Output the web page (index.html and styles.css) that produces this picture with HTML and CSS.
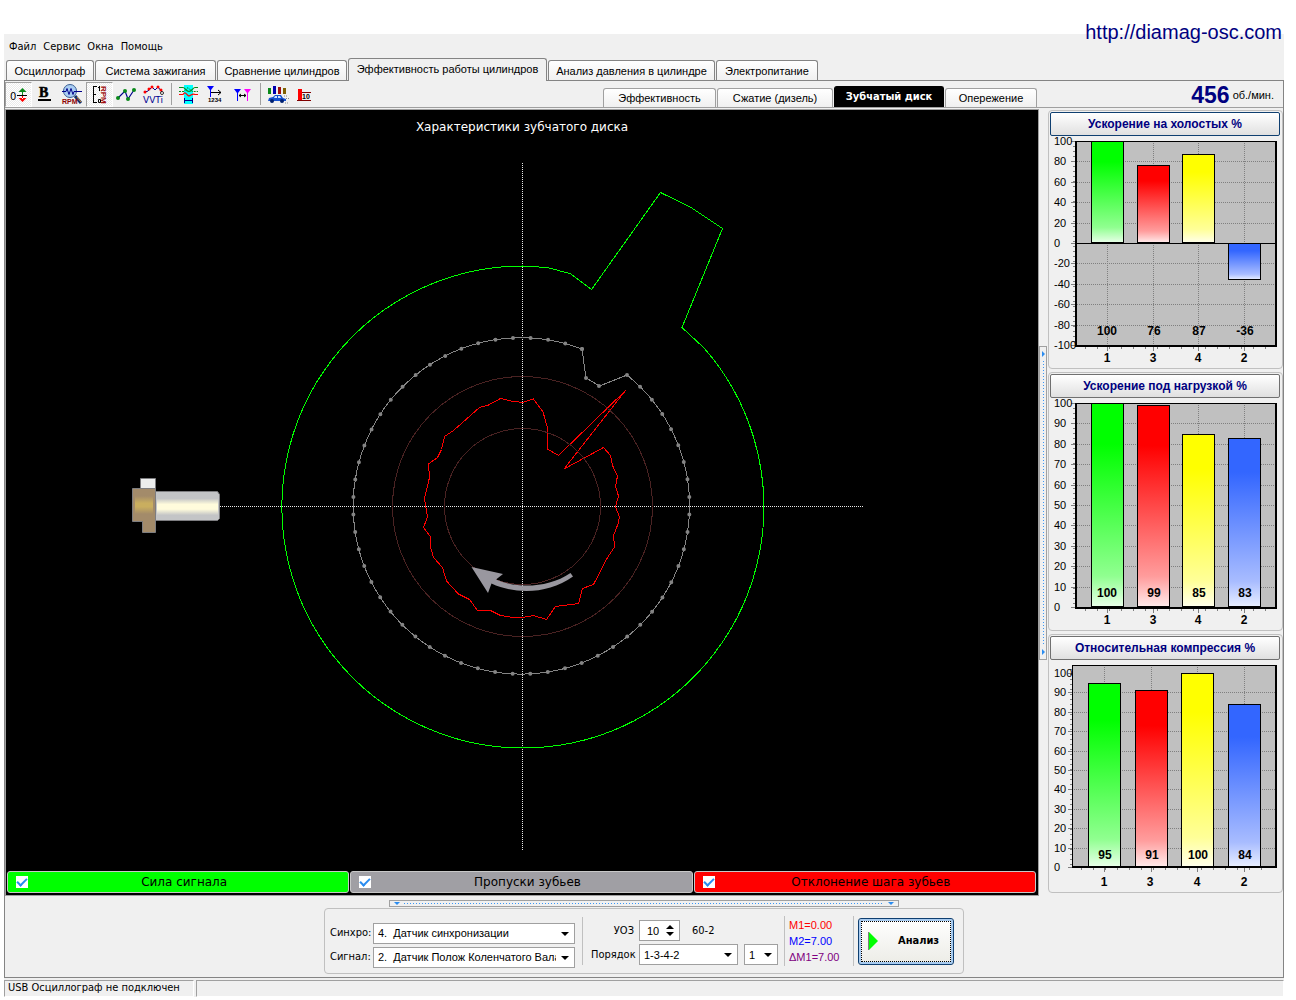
FILE: index.html
```html
<!DOCTYPE html>
<html lang="ru">
<head>
<meta charset="utf-8">
<meta name="viewport" content="width=device-width, initial-scale=1">
<title>Осциллограф</title>
<link rel="stylesheet" href="styles.css">
</head>
<body>
<header class="site"><a class="site-link" href="http://diamag-osc.com">http://diamag-osc.com</a></header>
<div class="app">
  <nav class="menu">
    <a href="#file">Файл</a><a href="#service">Сервис</a><a href="#windows">Окна</a><a href="#help">Помощь</a>
  </nav>
  <div class="tabs" role="tablist">
    <button class="tab" role="tab">Осциллограф</button>
    <button class="tab" role="tab">Система зажигания</button>
    <button class="tab" role="tab">Сравнение цилиндров</button>
    <button class="tab tab-current" role="tab" aria-selected="true">Эффективность работы цилиндров</button>
    <button class="tab" role="tab">Анализ давления в цилиндре</button>
    <button class="tab" role="tab">Электропитание</button>
  </div>
  <main class="page">
    <div class="toolbar">
      <div class="tools">
        <button class="tool tool-on" aria-label="Ноль"><svg class="icon" viewBox="0 0 27 24"><text class="i-txt" x="5" y="18" font-size="10">0</text><path d="M12 13h10v1H12z" fill="#000"/><path d="M17 10h1v3h-1zM13.500 10l4-4 4 4z" fill="#0a8a1a"/><path d="M17 14h1v3h-1zM13.500 16l4 4 4-4z" fill="#f00"/></svg></button>
        <button class="tool" aria-label="Жирные линии"><svg class="icon" viewBox="0 0 27 24"><text x="7" y="15" font-size="14" font-weight="700" font-family="Liberation Serif, serif" stroke="#000" stroke-width=".6">B</text><path d="M6 17h13v2H6z"/></svg></button>
        <button class="tool" aria-label="Обороты"><svg class="icon" viewBox="0 0 27 24"><circle cx="11" cy="9" r="6.500" fill="#a9cdf2" stroke="#3b5f93"/><path d="M3 9.500h4l1-3 2 6 2-6 2 6 1-3h8" fill="none" stroke="#00008b"/><path d="M16 14l6 7" stroke="#14306b" stroke-width="3"/><path d="M18 15l4 5" stroke="#c88b3a"/><text x="3" y="22" font-size="7" font-weight="700" fill="#8b0000" font-family="Liberation Sans, sans-serif">RPM</text></svg></button>
        <button class="tool tool-on" aria-label="Шкала оборотов"><svg class="icon" viewBox="0 0 27 24"><path d="M11 4.500H7M7 12.500h3M11 20.500H7M7.500 4v17" fill="none" stroke="#000"/><path d="M13.500 4v5M12 5.500h2M12.500 17.500h2v3h-2z" fill="none" stroke="#000"/><text transform="translate(15 4) rotate(90)" font-size="8" font-weight="700" fill="#a01010" font-family="Liberation Sans, sans-serif">RPM</text></svg></button>
        <button class="tool" aria-label="График"><svg class="icon" viewBox="0 0 27 24"><path d="M5 16l7-7 3 8 6-9" fill="none" stroke="#00008b" stroke-width="1.200"/><g fill="#0a8a1a"><circle cx="5" cy="16" r="2"/><circle cx="12" cy="9" r="2"/><circle cx="15" cy="17" r="2"/><circle cx="21" cy="8" r="2"/></g></svg></button>
        <button class="tool" aria-label="VVTi"><svg class="icon" viewBox="0 0 27 24"><path d="M5 10l3-1 4-4 3 3 3-3 4 5" fill="none" stroke="#00008b"/><g fill="#f00"><circle cx="5" cy="10" r="1.500"/><circle cx="9" cy="7" r="1.500"/><circle cx="12" cy="5" r="1.500"/><circle cx="18" cy="5" r="1.500"/><circle cx="21" cy="8" r="1.500"/></g><circle cx="22" cy="11" r="1.500" fill="#fff" stroke="#000" stroke-width=".8"/><text x="3" y="21" font-size="9" fill="#000090" font-family="DejaVu Sans, sans-serif">VVTi</text></svg></button>
        <span class="tool-sep"></span>
        <button class="tool" aria-label="Сигналы"><svg class="icon" viewBox="0 0 27 24"><path d="M9 3h9v19H9z" fill="#0ff"/><path d="M4 5.500h4c2 0 3 4 6 4s4-4 6-4h3" fill="none" stroke="#0a8a1a" stroke-width="1.200"/><path d="M4 9.500h5l4-4 4 4h6" fill="none" stroke="#0a8a1a" stroke-dasharray="2 1"/><path d="M4 12.500h4c2-3 3-1 5 1s4-3 7-1h3" fill="none" stroke="#f00" stroke-width="1.200"/><path d="M9 18.500h9M9.500 16v5M17.500 16v5" fill="none" stroke="#00008b"/></svg></button>
        <button class="tool" aria-label="Порядок цилиндров"><svg class="icon" viewBox="0 0 27 24"><path d="M5 4h7l-3 4v7H8V8z" fill="#00f"/><path d="M9 10.500h10M16 8l3 2.500-3 2.500" fill="none" stroke="#000"/><text x="6" y="20" font-size="6" font-weight="700" font-family="Liberation Sans, sans-serif">1234</text></svg></button>
        <button class="tool" aria-label="Метки"><svg class="icon" viewBox="0 0 27 24"><path d="M5 7h7l-3 4v8H8v-8z" fill="#00f"/><path d="M15 7h7l-3 4v8h-1v-8z" fill="#f0f"/><path d="M10 13.500h7M12 12l-2 1.500 2 1.500M15 12l2 1.500-2 1.500" fill="none" stroke="#000"/></svg></button>
        <span class="tool-sep"></span>
        <button class="tool" aria-label="Динамика"><svg class="icon" viewBox="0 0 27 24"><path d="M4 6h3v6H4z" fill="#0a8a1a"/><path d="M9 4h3v8H9z" fill="#0000b0"/><path d="M14 5h3v7h-3z" fill="#a01010"/><path d="M19 6h3v6h-3z" fill="#806000"/><path d="M4 19l1-3 4-1 2-2h6l2 3 3 1v2z" fill="#1450d0"/><path d="M11 14h2v2h-3zM14 14h2l1 2h-3z" fill="#cfe4ff"/><circle cx="8" cy="19" r="2" fill="#002070"/><circle cx="18" cy="19" r="2" fill="#002070"/><path d="M20 14h4M21 21h3M22 16.500h3" stroke="#888" stroke-dasharray="1 1"/></svg></button>
        <button class="tool" aria-label="Средние"><svg class="icon" viewBox="0 0 27 24"><path d="M7 7h4v11H7z" fill="#f00"/><path d="M6 18h14v1H6zM11 10h9v1h-9z" fill="#800000"/><text x="11" y="17" font-size="7" font-weight="700" font-family="Liberation Sans, sans-serif">10</text></svg></button>
      </div>
      <div class="subtabs" role="tablist">
        <button class="tab subtab" role="tab">Эффективность</button>
        <button class="tab subtab" role="tab">Сжатие (дизель)</button>
        <button class="tab subtab subtab-current" role="tab" aria-selected="true">Зубчатый диск</button>
        <button class="tab subtab" role="tab">Опережение</button>
      </div>
      <div class="rpm"><strong class="rpm-value">456</strong><span>об./мин.</span></div>
    </div>
    <div class="work">
      <section class="scope">
        <h1 class="scope-title">Характеристики зубчатого диска</h1>
        <svg class="disk" viewBox="6 140 1032 731" role="img" aria-label="Зубчатый диск">
          <defs>
            <linearGradient id="steel" x2="0" y2="1"><stop offset="0" stop-color="#c3c4c6"/><stop offset=".2" stop-color="#c3c4c6"/><stop offset=".42" stop-color="#fffbdc"/><stop offset=".6" stop-color="#fffbdc"/><stop offset=".82" stop-color="#c3c4c6"/></linearGradient>
            <linearGradient id="brass" x2="0" y2="1"><stop offset="0" stop-color="#a38b6a"/><stop offset=".4" stop-color="#c9ae5f"/><stop offset=".6" stop-color="#c9ae5f"/><stop offset="1" stop-color="#a38b6a"/></linearGradient>
          </defs>
          <g fill="none" shape-rendering="crispEdges">
            <path d="M522.500 163v687M220 506.500h643" stroke="#e8e8e8" stroke-dasharray="1 1"/>
            <path d="M591.500 289.500L660.500 192.500 691 207.500 722.500 228.500 682 327.500 704 348A241 241 0 1 1 522.500 266L547 267.500 570 273.500Z" stroke="#0f0"/>
            <path d="M627 375A168.200 168.200 0 1 1 582 349L586 378 599.500 386Z" stroke="#848484"/>
            <path d="M533.500 399L543 412 547.500 428V449L558.500 455.500 625.500 390.500 564 469 603.500 447.500 610.500 455.500 612.500 465.500 617.500 476 615.500 486.500 618.500 496 615.500 507 619.500 517 618 524 613.500 535.500 614.500 547 607.500 557.500 593.500 584.500 582.500 588.500 578.500 603.500 555.500 606.500 546.500 619.500 533.500 615.500 522.500 617.500 510 617 500.500 615.500 490.500 610.500H477.500L469.500 599.500 458.500 594 446.500 581 442.500 567.500 433.500 557.500 430.500 547V537L423.500 527.500 427.500 517 424.500 498.500 429.500 477.500 428.500 464 437.500 457.500 441.500 449.500 444.500 436.500 453.500 430.500 479.500 407.500 488.500 405 500.500 398.500 511 401 522.500 402.500Z" stroke="#f00"/>
            <circle cx="522.500" cy="506.500" r="130" stroke="#4a2222"/>
            <circle cx="522.500" cy="506.500" r="78" stroke="#4a2222"/>
          </g>
          <path d="M627 375A168.200 168.200 0 1 1 582 349" pathLength="57" fill="none" stroke="#848484" stroke-width="4" stroke-linecap="round" stroke-dasharray="0 1"/>
          <g fill="#848484"><circle cx="582" cy="349" r="2"/><circle cx="586" cy="378" r="2"/><circle cx="599" cy="386" r="2"/></g>
          <path d="M471.500 567l31.500 7-7 5.500c20 9 52 9 74.500-6.500l2.500 3.500c-25 18-58 18-81.500 7L488 593z" fill="#99979f"/>
          <g stroke="#7d7d80">
            <path d="M140.500 478.500h15v11h-15z" fill="#eceded"/>
            <path d="M132.500 488.500h23v44h-13v-11h-10z" fill="#a38b6a"/>
            <path d="M155.500 491.500h62l2 3v24l-2 2h-62z" fill="#c3c4c6"/>
          </g>
          <path d="M135 496h18v18h-18z" fill="url(#brass)"/>
          <rect x="157" y="493" width="61" height="27" rx="2" fill="url(#steel)"/>
        </svg>
        <div class="layers">
          <label class="layer layer-signal"><input class="check" type="checkbox" checked><span>Сила сигнала</span></label>
          <label class="layer layer-missing"><input class="check" type="checkbox" checked><span>Пропуски зубьев</span></label>
          <label class="layer layer-step"><input class="check" type="checkbox" checked><span>Отклонение шага зубьев</span></label>
        </div>
      </section>
      <div class="splitter splitter-v"></div>
      <aside class="charts">
        <section class="card">
          <button class="card-title card-title-focus">Ускорение на холостых %</button>
          <svg class="chart" viewBox="0 0 230 231">
            <defs>
              <linearGradient id="g" x2="0" y2="1"><stop offset="0" stop-color="#0f0"/><stop offset=".2" stop-color="#0f0"/><stop offset=".85" stop-color="#90ff90"/><stop offset="1" stop-color="#e8ffe8"/></linearGradient>
              <linearGradient id="r" x2="0" y2="1"><stop offset="0" stop-color="#f00"/><stop offset=".2" stop-color="#f00"/><stop offset=".85" stop-color="#ff9c9c"/><stop offset="1" stop-color="#ffeaea"/></linearGradient>
              <linearGradient id="y" x2="0" y2="1"><stop offset="0" stop-color="#ff0"/><stop offset=".2" stop-color="#ff0"/><stop offset=".85" stop-color="#ffff98"/><stop offset="1" stop-color="#ffffea"/></linearGradient>
              <linearGradient id="b" x2="0" y2="1"><stop offset="0" stop-color="#36f"/><stop offset=".2" stop-color="#36f"/><stop offset=".85" stop-color="#a8bcff"/><stop offset="1" stop-color="#e8eeff"/></linearGradient>
            </defs>
            <path class="plot" d="M25 5h201v205H25z"/>
            <path class="grid" d="M25 25.500h201M25 46.500h201M25 66.500h201M25 87.500h201M25 127.500h201M25 148.500h201M25 168.500h201M25 189.500h201M57.500 5v205M103.500 5v205M148.500 5v205M194.500 5v205"/>
            <path class="tick" d="M21 5.500h4M21 25.500h4M21 46.500h4M21 66.500h4M21 87.500h4M21 107.500h4M21 127.500h4M21 148.500h4M21 168.500h4M21 189.500h4M21 209.500h4M57.500 211v4M103.500 211v4M148.500 211v4M194.500 211v4"/>
            <path class="minor-y" d="M24 5v205"/><path class="minor-x" d="M35 212h185"/>
            <path class="axis" d="M25 107.500h201"/>
            <g class="bar"><path d="M41.500 5.500h32v101h-32z" fill="url(#g)"/><path d="M87.500 29.500h32v77h-32z" fill="url(#r)"/><path d="M132.500 18.500h32v88h-32z" fill="url(#y)"/><path d="M178.500 107.500h32v36h-32z" fill="url(#b)"/></g>
            <path class="frame-top" d="M25 5.500h201"/><path class="frame" d="M26 5v205M25 210h201V5"/>
            <g class="scale"><text x="4" y="9">100</text><text x="4" y="29">80</text><text x="4" y="50">60</text><text x="4" y="70">40</text><text x="4" y="91">20</text><text x="4" y="111">0</text><text x="4" y="131">-20</text><text x="4" y="152">-40</text><text x="4" y="172">-60</text><text x="4" y="193">-80</text><text x="4" y="213">-100</text></g>
            <g class="value"><text x="57" y="199">100</text><text x="104" y="199">76</text><text x="149" y="199">87</text><text x="195" y="199">-36</text><text x="57" y="226">1</text><text x="103" y="226">3</text><text x="148" y="226">4</text><text x="194" y="226">2</text></g>
          </svg>
        </section>
        <section class="card">
          <button class="card-title">Ускорение под нагрузкой %</button>
          <svg class="chart" viewBox="0 0 230 231">
            <path class="plot" d="M25 5h201v205H25z"/>
            <path class="grid" d="M25 25.500h201M25 46.500h201M25 66.500h201M25 87.500h201M25 107.500h201M25 127.500h201M25 148.500h201M25 168.500h201M25 189.500h201M57.500 5v205M103.500 5v205M148.500 5v205M194.500 5v205"/>
            <path class="tick" d="M21 5.500h4M21 25.500h4M21 46.500h4M21 66.500h4M21 87.500h4M21 107.500h4M21 127.500h4M21 148.500h4M21 168.500h4M21 189.500h4M21 209.500h4M57.500 211v4M103.500 211v4M148.500 211v4M194.500 211v4"/>
            <path class="minor-y" d="M24 5v205"/><path class="minor-x" d="M35 212h185"/>
            <g class="bar"><path d="M41.500 5.500h32v203h-32z" fill="url(#g)"/><path d="M87.500 7.500h32v201h-32z" fill="url(#r)"/><path d="M132.500 36.500h32v172h-32z" fill="url(#y)"/><path d="M178.500 40.500h32v168h-32z" fill="url(#b)"/></g>
            <path class="frame-top" d="M25 5.500h201"/><path class="frame" d="M26 5v205M25 210h201V5"/>
            <g class="scale"><text x="4" y="9">100</text><text x="4" y="29">90</text><text x="4" y="50">80</text><text x="4" y="70">70</text><text x="4" y="91">60</text><text x="4" y="111">50</text><text x="4" y="131">40</text><text x="4" y="152">30</text><text x="4" y="172">20</text><text x="4" y="193">10</text><text x="4" y="213">0</text></g>
            <g class="value"><text x="57" y="199">100</text><text x="104" y="199">99</text><text x="149" y="199">85</text><text x="195" y="199">83</text><text x="57" y="226">1</text><text x="103" y="226">3</text><text x="148" y="226">4</text><text x="194" y="226">2</text></g>
          </svg>
        </section>
        <section class="card">
          <button class="card-title">Относительная компрессия %</button>
          <svg class="chart" viewBox="0 0 230 231">
            <path class="plot" d="M22 5h204v202H22z"/>
            <path class="grid" d="M22 32.500h204M22 52.500h204M22 71.500h204M22 91.500h204M22 110.500h204M22 129.500h204M22 149.500h204M22 168.500h204M22 188.500h204M54.500 5v202M101.500 5v202M147.500 5v202M194.500 5v202"/>
            <path class="tick" d="M18 13.500h4M18 32.500h4M18 52.500h4M18 71.500h4M18 91.500h4M18 110.500h4M18 129.500h4M18 149.500h4M18 168.500h4M18 188.500h4M18 207.500h4M54.500 208v4M101.500 208v4M147.500 208v4M194.500 208v4"/>
            <path class="minor-y" d="M21 9v198"/><path class="minor-x" d="M31 209h192"/>
            <g class="bar"><path d="M38.500 23.500h32v183h-32z" fill="url(#g)"/><path d="M85.500 30.500h32v176h-32z" fill="url(#r)"/><path d="M131.500 13.500h32v193h-32z" fill="url(#y)"/><path d="M178.500 44.500h32v162h-32z" fill="url(#b)"/></g>
            <path class="frame-top" d="M22.500 207V5.500h204"/><path class="frame" d="M22 207h204V5"/>
            <g class="scale"><text x="4" y="17">100</text><text x="4" y="36">90</text><text x="4" y="56">80</text><text x="4" y="75">70</text><text x="4" y="95">60</text><text x="4" y="114">50</text><text x="4" y="133">40</text><text x="4" y="153">30</text><text x="4" y="172">20</text><text x="4" y="192">10</text><text x="4" y="211">0</text></g>
            <g class="value"><text x="55" y="199">95</text><text x="102" y="199">91</text><text x="148" y="199">100</text><text x="195" y="199">84</text><text x="54" y="226">1</text><text x="100" y="226">3</text><text x="147" y="226">4</text><text x="194" y="226">2</text></g>
          </svg>
        </section>
      </aside>
    </div>
    <footer class="dock">
      <div class="splitter splitter-h"></div>
      <form class="controls">
        <div class="pair">
          <label for="sync">Синхро:</label>
          <span class="drop"><select id="sync"><option>4.&nbsp; Датчик синхронизации</option></select></span>
          <label for="signal">Сигнал:</label>
          <span class="drop"><select id="signal"><option>2.&nbsp; Датчик Полож Коленчатого Вала</option></select></span>
        </div>
        <div class="pair pair-order">
          <label for="uoz">УОЗ</label>
          <div class="line">
            <span class="spin"><input id="uoz" type="number" value="10"><span class="spin-arrows"><button type="button" class="up" aria-label="Больше"></button><button type="button" class="down" aria-label="Меньше"></button></span></span>
            <span class="teeth">60-2</span>
          </div>
          <label for="order">Порядок</label>
          <div class="line">
            <span class="drop drop-order"><select id="order"><option>1-3-4-2</option></select></span>
            <span class="drop drop-first"><select aria-label="Первый цилиндр"><option>1</option></select></span>
          </div>
        </div>
        <div class="marks"><span class="m1">M1=0.00</span><span class="m2">M2=7.00</span><span class="dm">ΔM1=7.00</span></div>
        <button type="button" class="run"><svg class="run-icon" viewBox="0 0 10 20"><path d="M1 1l9 9-9 9z" fill="#0f0"/><path d="M.500 1v18" stroke="#808080"/></svg><span>Анализ</span></button>
      </form>
    </footer>
  </main>
  <div class="status"><span class="status-cell">USB Осциллограф не подключен</span><span class="status-cell"></span></div>
</div>
</body>
</html>
```
FILE: styles.css
```css
* { box-sizing: border-box; }
body {
  margin: 0;
  min-height: 100vh;
  display: flex;
  flex-direction: column;
  padding: 0 12px 4px 4px;
  background: #fff;
  color: #000;
  font: 11px/14px "DejaVu Sans Condensed", "DejaVu Sans", sans-serif;
}
button, input, select { font: inherit; color: inherit; }
button { padding: 0; border: 0; background: none; white-space: nowrap; }

.site { position: relative; height: 34px; }
.site-link {
  position: absolute;
  right: 2px;
  top: 20px;
  font: 20px/24px "Liberation Sans", sans-serif;
  color: #000080;
  text-decoration: none;
}
.app { flex: 1; display: flex; flex-direction: column; background: #f0f0f0; }

.menu { display: flex; gap: 7px; height: 24px; padding: 6px 5px 0; }
.menu a { color: #000; text-decoration: none; }

.tabs {
  display: grid;
  grid-template-columns: 88px 121px 130px 199px 167px 102px;
  column-gap: 1px;
  align-items: end;
  padding-left: 2px;
  height: 22px;
}
.tab {
  height: 20px;
  border: 1px solid #848484;
  border-bottom: 0;
  border-radius: 3px 3px 0 0;
  background: linear-gradient(#fff, #f0f0f0);
  font: 11px/18px "Liberation Sans", sans-serif;
}
.tab-current { height: 23px; margin-bottom: -1px; background: #f0f0f0; position: relative; padding-bottom: 3px; }

.page { flex: 1; display: flex; flex-direction: column; border: 1px solid #848484; }
.toolbar { display: flex; height: 27px; border-bottom: 1px solid #a0a0a0; }
.tools { display: flex; flex: 1; align-items: center; }
.tool { width: 27px; height: 25px; border: 1px solid transparent; }
.tool-on { border-color: #a0a0a0 #fff #fff #a0a0a0; background: repeating-conic-gradient(#fff 0 25%, #ebebeb 0 50%) 0 0 / 2px 2px; }
.icon { display: block; width: 27px; height: 24px; margin: -1px; }
.i-txt { font-family: "DejaVu Sans", sans-serif; }
.tool-sep { width: 8px; height: 22px; background: linear-gradient(#a0a0a0, #a0a0a0) 4px 0 / 1px 100% no-repeat; }
.subtabs { display: grid; grid-template-columns: 113px 116px 110px 92px; column-gap: 1px; align-items: end; }
.subtab { height: 19px; border-color: #a0a0a0; }
.subtab-current { height: 21px; background: #000; border-color: #000; color: #fff; font-weight: 700; font-family: "DejaVu Sans Condensed", sans-serif; }
.rpm { width: 246px; padding: 2px 9px 0; display: flex; justify-content: flex-end; align-items: center; gap: 3px; font-family: "Liberation Sans", sans-serif; }
.rpm-value { font-size: 23px; line-height: 24px; color: #000080; }

.work { flex: 1; display: flex; padding-top: 1px; }
.scope { flex: 1; display: flex; flex-direction: column; background: #000; border: 1px solid #a0a0a0; min-width: 0; }
.scope-title { margin: 0; padding: 9px 0 5px; text-align: center; color: #fff; font: 12px/16px "DejaVu Sans", sans-serif; }
.disk { flex: 1; display: block; width: 100%; min-height: 0; }
.layers { display: grid; grid-template-columns: 1fr 1fr 1fr; gap: 1px; padding: 0 2px 2px 1px; }
.layer {
  display: grid;
  grid-template-columns: 12px 1fr;
  align-items: center;
  height: 22px;
  padding: 0 8px;
  border: 1px solid #c8c8c8;
  border-radius: 3px;
  text-align: center;
  font: 12px/16px "DejaVu Sans", sans-serif;
}
.layer-signal { background: #0f0; }
.layer-missing { background: #a09fa4; }
.layer-step { background: #f00; }
.check {
  appearance: none;
  width: 12px;
  height: 12px;
  margin: 0;
  background: #fff;
  display: grid;
  place-items: center;
}
.check:checked::before { content: ""; width: 8px; height: 4px; margin-bottom: 2px; border: solid #2a8cf0; border-width: 0 0 2px 2px; transform: rotate(-45deg); }

.splitter { display: flex; justify-content: space-between; align-items: center; border: 1px solid #a0a0a0; }
.splitter::before, .splitter::after { content: ""; border: solid transparent; }
.splitter-v {
  flex-direction: column;
  align-self: center;
  width: 8px;
  height: 314px;
  background: repeating-linear-gradient(#3a96f5 0 1px, transparent 1px 3px) 3px 14px / 1px 284px no-repeat;
}
.splitter-v::before, .splitter-v::after { border-width: 3px 0 3px 3px; border-left-color: #2a8cf0; margin: 4px 0; }
.splitter-h {
  width: 510px;
  height: 7px;
  background: repeating-linear-gradient(90deg, #3a96f5 0 1px, transparent 1px 3px) 14px 2px / 480px 1px no-repeat;
}
.splitter-h::before, .splitter-h::after { border-width: 3px 3px 0; border-top-color: #2a8cf0; margin: 0 4px; }

.charts { width: 236px; padding: 1px 0 0 1px; display: flex; flex-direction: column; gap: 3px; }
.card { border: 1px solid #c0c0c0; border-radius: 4px; padding: 1px 2px 1px 1px; }
.card-title {
  display: block;
  width: 100%;
  height: 24px;
  border: 1px solid #707070;
  border-radius: 2px;
  background: linear-gradient(#fff, #e0e0e0);
  color: #000080;
  font: 700 12px/20px "Liberation Sans", sans-serif;
}
.card-title-focus { border-color: #0f3f70; }
.chart { display: block; width: 100%; font-family: "Liberation Sans", sans-serif; }
.plot { fill: #c0c0c0; }
.grid, .tick, .axis, .frame, .frame-top, .bar, .minor-x, .minor-y { shape-rendering: crispEdges; fill: none; }
.grid { stroke: #808080; stroke-dasharray: 1 1; }
.tick { stroke: #808080; }
.minor-y { stroke: #808080; stroke-width: 2; stroke-dasharray: 1 4; }
.minor-x { stroke: #808080; stroke-width: 2; stroke-dasharray: 1 11; }
.axis { stroke: #000; }
.frame { stroke: #000; stroke-width: 2; }
.frame-top { stroke: #000; }
.bar { stroke: #000; }
.scale { font-size: 11px; }
.value { font-size: 12px; font-weight: 700; text-anchor: middle; }

.dock { display: flex; flex-direction: column; align-items: center; height: 81px; padding-top: 4px; }
.controls {
  display: flex;
  align-items: center;
  height: 66px;
  margin-top: 1px;
  padding: 0 9px 0 5px;
  border: 1px solid #c0c0c0;
  border-radius: 4px;
}
.pair { display: grid; grid-template-columns: 43px 202px; row-gap: 3px; align-items: center; padding-top: 8px; }
.pair-order {
  grid-template-columns: 43px 139px;
  column-gap: 5px;
  margin-left: 7px;
  padding: 3px 6px 0 8px;
  border-left: 1px solid #c0c0c0;
}
.pair-order label { text-align: right; }
.line { display: flex; gap: 6px; align-items: center; }
.drop { position: relative; display: flex; min-width: 0; }
.drop::after { content: ""; position: absolute; right: 6px; top: 9px; border: 4px solid transparent; border-top-color: #000; border-bottom: 0; pointer-events: none; }
.drop select {
  appearance: none;
  width: 100%;
  height: 21px;
  padding: 0 18px 0 4px;
  border: 1px solid #a0a0a0;
  border-radius: 0;
  background: #fff;
  font: 11px/18px "Liberation Sans", sans-serif;
}
.drop-order { width: 99px; }
.drop-first { width: 34px; }
.spin { display: flex; width: 41px; height: 21px; border: 1px solid #a0a0a0; background: #fff; }
.spin input { appearance: textfield; width: 26px; padding: 0 0 0 7px; border: 0; background: none; font: 11px/18px "Liberation Sans", sans-serif; }
.spin input::-webkit-inner-spin-button { appearance: none; display: none; }
.spin-arrows { display: flex; flex-direction: column; justify-content: space-evenly; }
.up, .down { border: 4px solid transparent; width: 8px; height: 4px; }
.up { border-bottom-color: #000; border-top: 0; }
.down { border-top-color: #000; border-bottom: 0; }
.teeth { margin-left: 6px; }
.marks { display: flex; flex-direction: column; width: 70px; height: 50px; padding: 1px 0 0 4px; border: solid #c0c0c0; border-width: 0 1px; font: 11px/16px "Liberation Sans", sans-serif; }
.m1 { color: #f00; }
.m2 { color: #00f; }
.dm { color: #800080; }
.run {
  display: flex;
  align-items: center;
  gap: 20px;
  width: 96px;
  height: 47px;
  margin-left: 4px;
  padding-left: 9px;
  border: 1px solid #0f3f70;
  border-radius: 3px;
  outline: 1px dotted #000;
  outline-offset: -4px;
  background: linear-gradient(#fff, #ecece6);
  box-shadow: inset 0 0 0 2px #a8cbf0;
  font-weight: 700;
}
.run-icon { width: 10px; height: 20px; }

.status { display: grid; grid-template-columns: 190px 1fr; gap: 2px; padding-top: 2px; }
.status-cell { height: 17px; padding: 0 3px; border: 1px solid #a0a0a0; border-right-color: #fff; border-bottom-color: #fff; }
```
